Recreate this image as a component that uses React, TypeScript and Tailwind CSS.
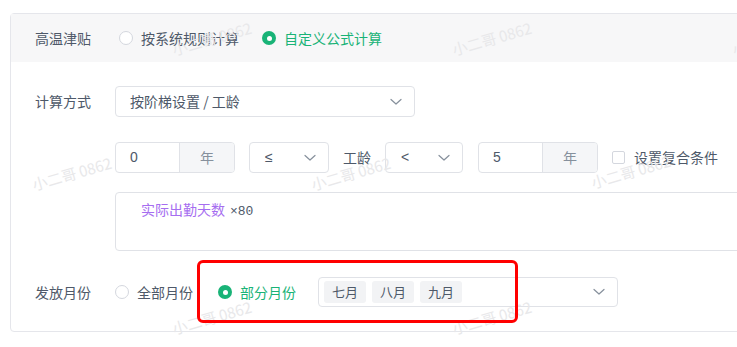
const font = { fontFamily: '"Noto Sans CJK SC", "Noto Sans", sans-serif' };

function Chevron() {
  return (
    <svg width="12" height="8" viewBox="0 0 12 8" fill="none">
      <polyline points="1,1.5 6,6 11,1.5" stroke="#86909c" strokeWidth="1.2" strokeLinecap="round" strokeLinejoin="round" />
    </svg>
  );
}

function Radio({ checked, label }: { checked?: boolean; label: string }) {
  return (
    <div className="flex items-center">
      {checked ? (
        <span className="w-[14px] h-[14px] rounded-full bg-[#19b377] flex items-center justify-center">
          <span className="w-[5px] h-[5px] rounded-full bg-white" />
        </span>
      ) : (
        <span className="w-[14px] h-[14px] rounded-full border border-[#d4d7de] bg-white" />
      )}
      <span className={`ml-[8px] text-[14px] ${checked ? 'text-[#19b377]' : 'text-[#4e5969]'}`}>{label}</span>
    </div>
  );
}

function YearInput({ value }: { value: string }) {
  return (
    <div className="flex w-[120px] h-[31px] border border-[#e0e2e7] rounded-[4px] overflow-hidden">
      <div className="w-[64px] flex items-center pl-[14px] text-[14px] text-[#4e5969] border-r border-[#e0e2e7] font-['Liberation_Sans']">{value}</div>
      <div className="flex-1 flex items-center justify-center bg-[#f5f6f8] text-[14px] text-[#86909c]">年</div>
    </div>
  );
}

function SmallSelect({ value, width }: { value: string; width: string }) {
  return (
    <div className={`${width} h-[31px] border border-[#e0e2e7] rounded-[4px] flex items-center justify-between pl-[15px] pr-[12px] text-[14px] text-[#4e5969]`}>
      <span className="font-['Liberation_Sans']">{value}</span>
      <Chevron />
    </div>
  );
}

const marks = [
  { x: 212, y: 39 },
  { x: 492, y: 39 },
  { x: 772, y: 39 },
  { x: 72, y: 174 },
  { x: 351, y: 174 },
  { x: 631, y: 172 },
  { x: 212, y: 318 },
  { x: 492, y: 318 },
];

export default function App() {
  return (
    <div className="relative w-[737px] h-[347px] bg-white overflow-hidden pt-[13px] pl-[10px]" style={font}>
      <div className="w-[760px] border border-[#e5e6eb] rounded-[4px]">
        <div className="h-[48px] bg-[#f7f7f8] flex items-center pl-[24px]">
          <span className="w-[84px] text-[14px] text-[#4e5969]">高温津贴</span>
          <div className="flex items-center gap-[23px]">
            <Radio label="按系统规则计算" />
            <Radio checked label="自定义公式计算" />
          </div>
        </div>

        <div className="pl-[24px] pt-[24px] pb-[24px]">
          <div className="flex items-center">
            <span className="w-[80px] text-[14px] text-[#4e5969]">计算方式</span>
            <div className="w-[300px] h-[31px] border border-[#e0e2e7] rounded-[4px] flex items-center justify-between pl-[14px] pr-[12px] text-[14px] text-[#4e5969]">
              <span>按阶梯设置 / 工龄</span>
              <Chevron />
            </div>
          </div>

          <div className="flex items-center mt-[25px] pl-[80px]">
            <YearInput value="0" />
            <div className="ml-[14px]"><SmallSelect value="≤" width="w-[80px]" /></div>
            <span className="ml-[14px] text-[14px] text-[#4e5969]">工龄</span>
            <div className="ml-[14px]"><SmallSelect value="<" width="w-[78px]" /></div>
            <div className="ml-[15px]"><YearInput value="5" /></div>
            <span className="ml-[14px] w-[13px] h-[13px] border border-[#d4d7de] rounded-[2px] bg-white" />
            <span className="ml-[9px] text-[14px] text-[#4e5969]">设置复合条件</span>
          </div>

          <div className="ml-[80px] mt-[19px] w-[660px] h-[59px] border border-[#e0e2e7] rounded-[4px] pl-[25px] pt-[6px] text-[14px]">
            <span className="text-[#a66ef0]">实际出勤天数</span>
            <span className="ml-[5px] text-[13px] text-[#4e5969] font-['Liberation_Mono']">×80</span>
          </div>

          <div className="flex items-center mt-[26px]">
            <span className="w-[80px] text-[14px] text-[#4e5969]">发放月份</span>
            <Radio label="全部月份" />
            <div className="ml-[25px]"><Radio checked label="部分月份" /></div>
            <div className="ml-[22px] w-[300px] h-[30px] border border-[#e0e2e7] rounded-[4px] flex items-center justify-between pl-[5px] pr-[12px]">
              <div className="flex gap-[6px]">
                {['七月', '八月', '九月'].map((m) => (
                  <span key={m} className="w-[42px] h-[22px] rounded-[3px] bg-[#f2f3f5] flex items-center justify-center text-[13px] text-[#4e5969]">{m}</span>
                ))}
              </div>
              <Chevron />
            </div>
          </div>
        </div>
      </div>

      {marks.map((m, i) => (
        <span
          key={i}
          className="absolute text-[15px] text-[#e8e8ea] whitespace-nowrap pointer-events-none select-none"
          style={{ left: m.x, top: m.y, transform: 'translate(-50%, -50%) rotate(-16deg)' }}
        >
          小二哥 0862
        </span>
      ))}

      <div className="absolute left-[197px] top-[260px] w-[321px] h-[63px] border-[3px] border-[#ff0000] rounded-[6px] pointer-events-none" />
    </div>
  );
}
